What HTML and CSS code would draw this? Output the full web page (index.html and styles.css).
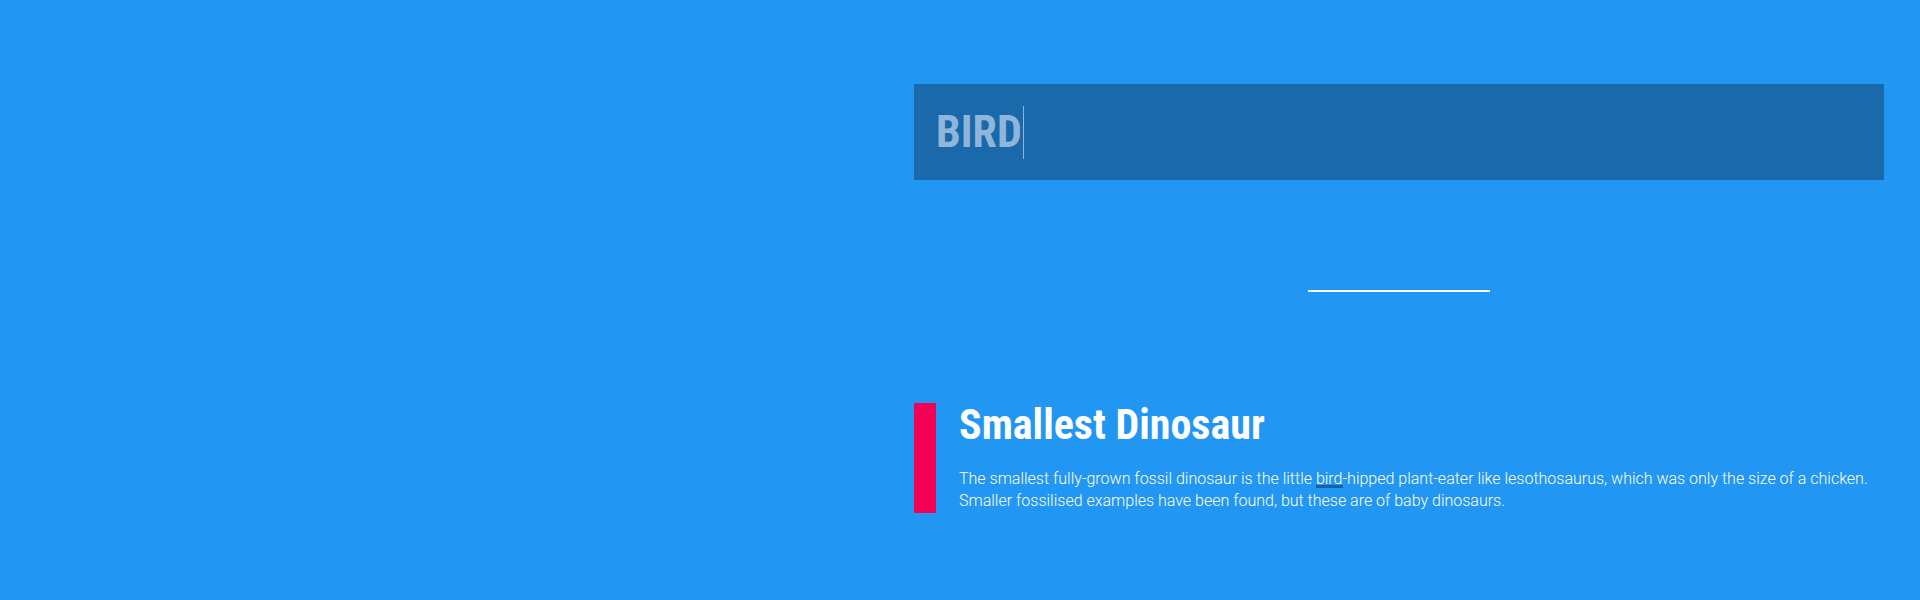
FILE: index.html
```html
<!DOCTYPE html>
<html lang="en">
<head>
<meta charset="utf-8">
<title>Smallest Dinosaur</title>
<link rel="stylesheet" href="styles.css">
</head>
<body>
<div class="page">
  <div class="left"></div>
  <main class="main">
    <div class="search">
      <span class="query">BIRD</span><span class="caret"></span>
    </div>
    <div class="divider-row"><span class="divider"></span></div>
    <article class="card">
      <div class="accent"></div>
      <div class="card-body">
        <h1 class="title">Smallest Dinosaur</h1>
        <p class="text">The smallest fully-grown fossil dinosaur is the little <mark class="hit">bird</mark>-hipped plant-eater like lesothosaurus, which was only the size of a chicken.<br>Smaller fossilised examples have been found, but these are of baby dinosaurs.</p>
      </div>
    </article>
  </main>
</div>
</body>
</html>
```

FILE: styles.css
```css
html, body {
  margin: 0;
  padding: 0;
  background: #2196f3;
  height: 100%;
}
body {
  font-family: Roboto, "Liberation Sans", sans-serif;
  color: #fff;
}
.page {
  display: grid;
  grid-template-columns: 1fr 970px;
  padding-right: 36px;
  padding-top: 84px;
}
.main {
  display: flex;
  flex-direction: column;
}
.search {
  height: 96px;
  background: #1a69ab;
  display: flex;
  align-items: center;
  padding-left: 22px;
  box-sizing: border-box;
}
.query {
  font-family: Roboto, sans-serif;
  font-stretch: condensed;
  font-weight: 700;
  font-size: 44px;
  color: #8fb6da;
  line-height: 1;
}
.caret {
  width: 1px;
  height: 53px;
  background: #8fb6da;
  margin-left: 1px;
}
.divider-row {
  display: flex;
  justify-content: center;
  padding-top: 110px;
}
.divider {
  width: 182px;
  height: 2px;
  background: #fff;
}
.card {
  display: flex;
  margin-top: 111px;
}
.accent {
  width: 22px;
  height: 110px;
  background: #f50057;
  flex: none;
}
.card-body {
  padding-left: 23px;
}
.title {
  margin: 0;
  font-family: Roboto, sans-serif;
  font-stretch: condensed;
  font-weight: 700;
  font-size: 42px;
  line-height: 1;
  padding-top: 1px;
}
.text {
  margin: 22px 0 0;
  font-weight: 300;
  font-size: 16px;
  line-height: 22px;
}
.hit {
  background: none;
  color: inherit;
  box-shadow: inset 0 -3px 0 #1a5f9f;
}
```
